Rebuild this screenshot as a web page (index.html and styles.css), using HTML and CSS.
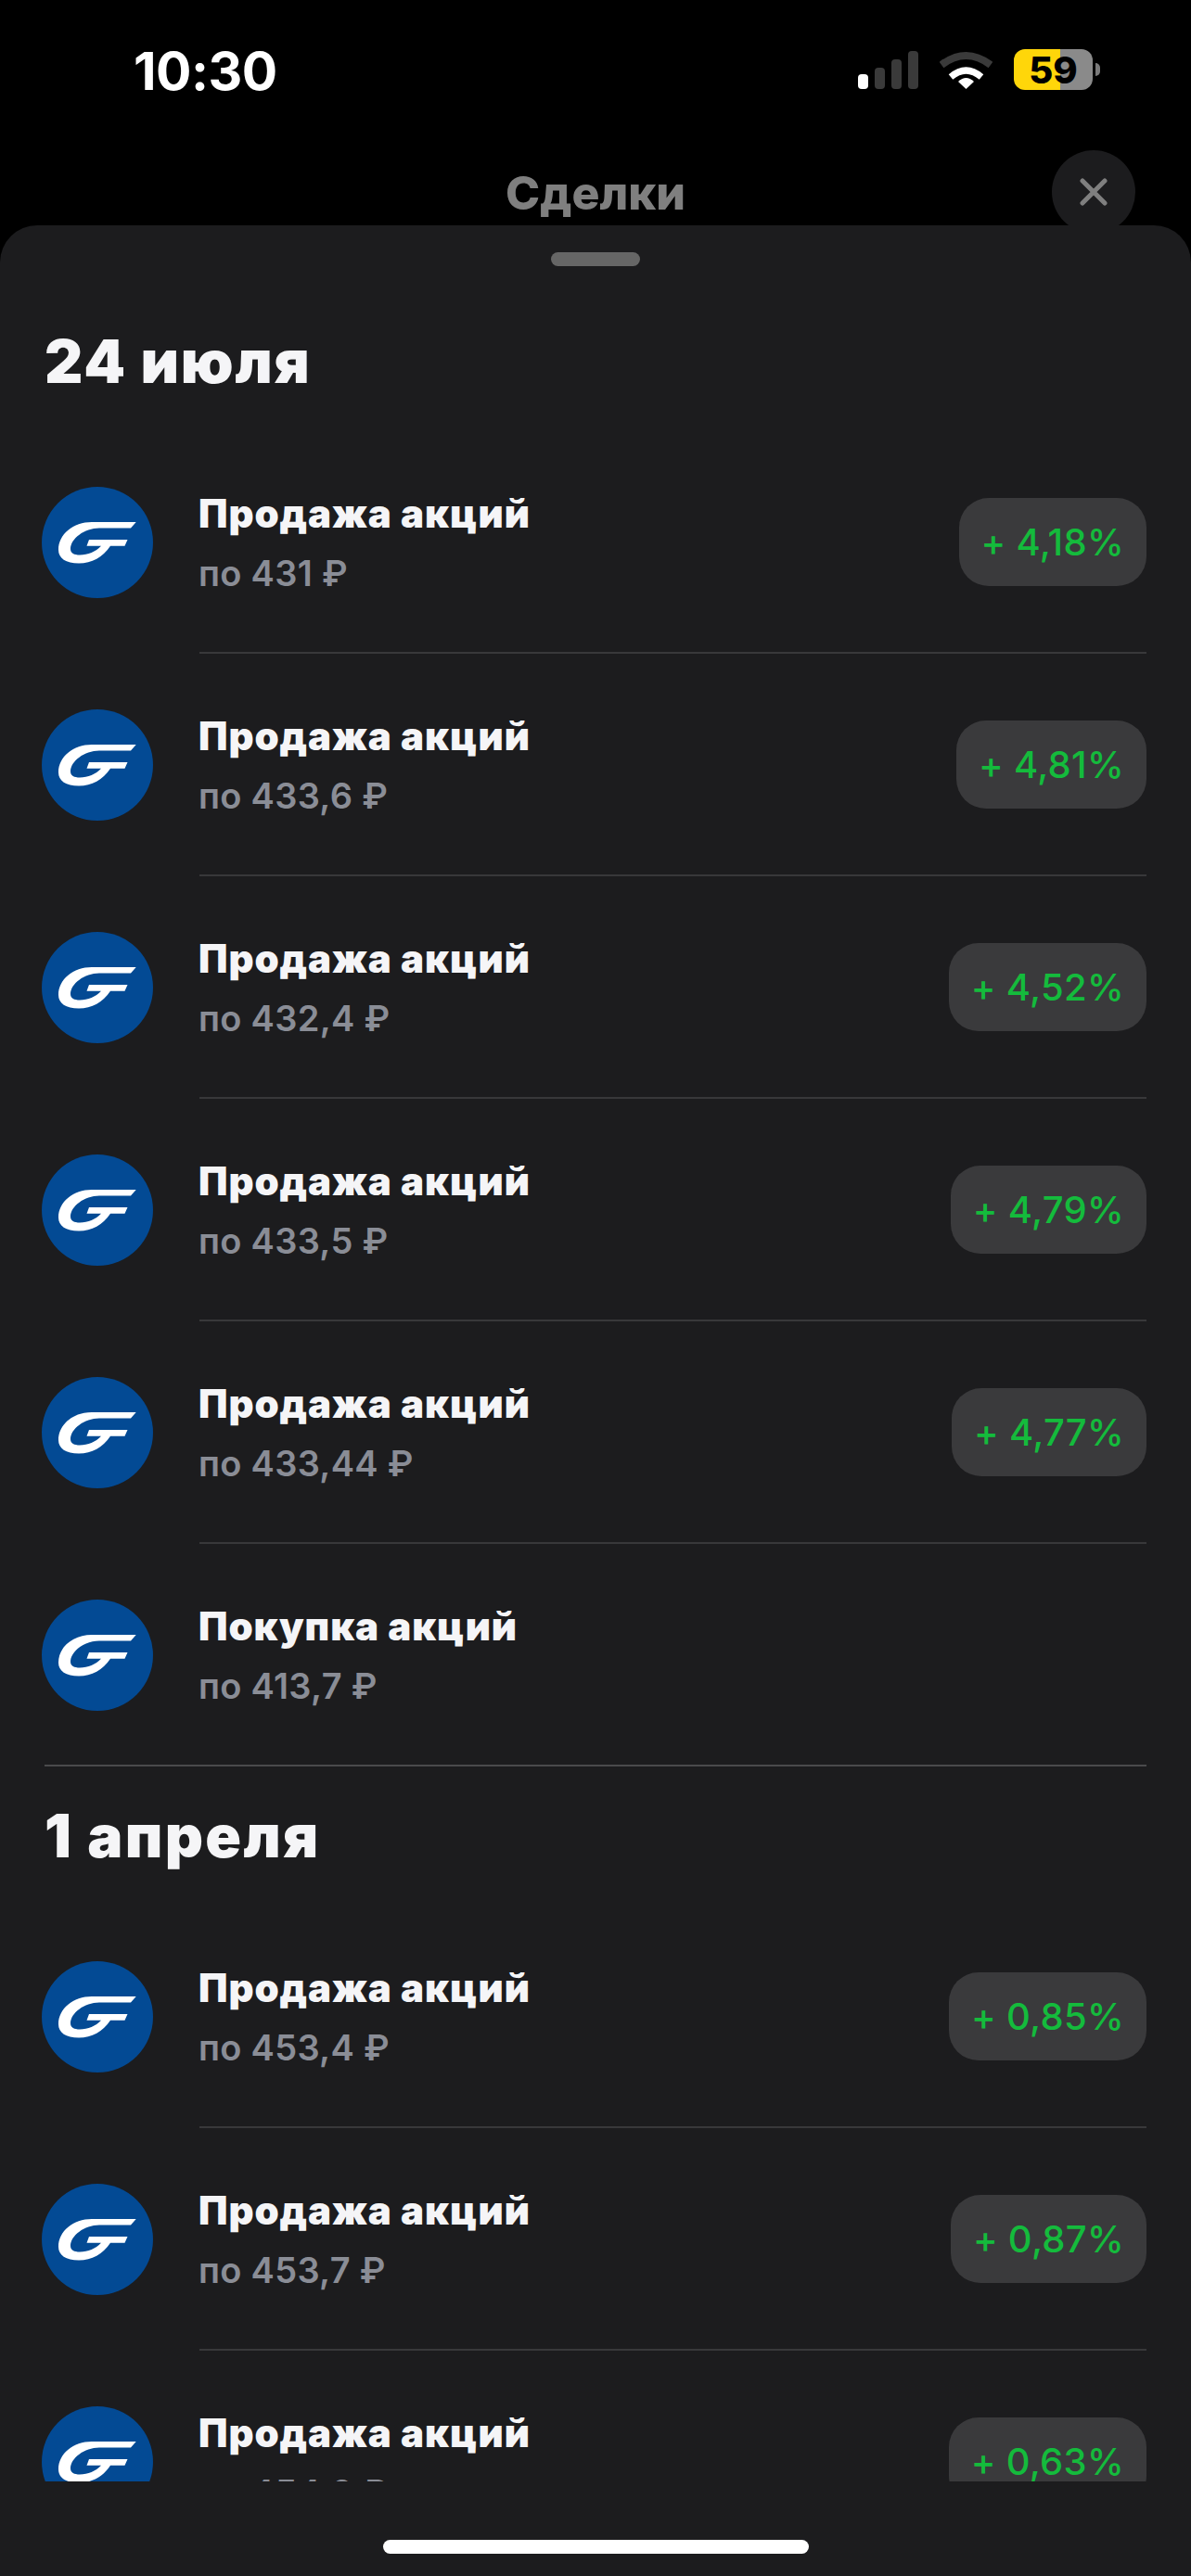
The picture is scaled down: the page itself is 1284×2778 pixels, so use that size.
FILE: index.html
```html
<!DOCTYPE html>
<html lang="ru">
<head>
  <meta charset="UTF-8">
  <title>Сделки</title>
  <link rel="stylesheet" href="styles.css">
</head>
<body>
  <svg class="defs" width="0" height="0">
    <symbol id="logo" viewBox="0 0 120 120">
      <circle cx="60" cy="60" r="60" fill="#034a94"/>
      <path fill="#fff" d="M101.7 38 L96 44.5 H62 C46 44.5 31 56 31 67 C31 71.5 35 73.5 41 73.5 C50 73.5 58 70 64 63.8 H48.5 L51 57 H92.5 L89.5 63.8 H74 C66 76 54 82.5 40 82.5 C26 82.5 18 77 18 68 C18 51 34 38 54 38 Z"/>
    </symbol>
  </svg>

  <div class="status-bar">
    <span class="time">10:30</span>
    <div class="status-icons">
      <div class="signal">
        <i class="bar bar-1 on"></i>
        <i class="bar bar-2"></i>
        <i class="bar bar-3"></i>
        <i class="bar bar-4"></i>
      </div>
      <svg class="wifi" width="57" height="41" viewBox="0 0 57 41">
        <path d="M2 15 Q28.5 -5 55 15" fill="none" stroke="#3a3a3a" stroke-width="8"/>
        <path d="M12 28 Q28.5 14 45 28" fill="none" stroke="#fff" stroke-width="7"/>
        <path d="M20 33 Q28.5 25 37 33 L28.5 41 Z" fill="#fff"/>
      </svg>
      <div class="battery"><span>59</span></div>
      <i class="battery-tip"></i>
    </div>
  </div>

  <div class="nav">
    <h1 class="nav-title">Сделки</h1>
    <button class="close" type="button">
      <svg width="30" height="30" viewBox="0 0 30 30">
        <path d="M3 3 L27 27 M27 3 L3 27" fill="none" stroke="#7f7f7f" stroke-width="5" stroke-linecap="round"/>
      </svg>
    </button>
  </div>

  <div class="sheet">
    <div class="handle"></div>
    <div class="list">
      <section class="group">
        <h2 class="date">24 июля</h2>
        <div class="row">
          <svg class="avatar"><use href="#logo"/></svg>
          <div class="row-body">
            <div class="info"><div class="name">Продажа акций</div><div class="price">по 431 ₽</div></div>
            <span class="pill">+ 4,18%</span>
          </div>
        </div>
        <div class="row">
          <svg class="avatar"><use href="#logo"/></svg>
          <div class="row-body">
            <div class="info"><div class="name">Продажа акций</div><div class="price">по 433,6 ₽</div></div>
            <span class="pill">+ 4,81%</span>
          </div>
        </div>
        <div class="row">
          <svg class="avatar"><use href="#logo"/></svg>
          <div class="row-body">
            <div class="info"><div class="name">Продажа акций</div><div class="price">по 432,4 ₽</div></div>
            <span class="pill">+ 4,52%</span>
          </div>
        </div>
        <div class="row">
          <svg class="avatar"><use href="#logo"/></svg>
          <div class="row-body">
            <div class="info"><div class="name">Продажа акций</div><div class="price">по 433,5 ₽</div></div>
            <span class="pill">+ 4,79%</span>
          </div>
        </div>
        <div class="row">
          <svg class="avatar"><use href="#logo"/></svg>
          <div class="row-body">
            <div class="info"><div class="name">Продажа акций</div><div class="price">по 433,44 ₽</div></div>
            <span class="pill">+ 4,77%</span>
          </div>
        </div>
        <div class="row last">
          <svg class="avatar"><use href="#logo"/></svg>
          <div class="row-body">
            <div class="info"><div class="name">Покупка акций</div><div class="price">по 413,7 ₽</div></div>
          </div>
        </div>
      </section>

      <section class="group">
        <h2 class="date date-wide">1 апреля</h2>
        <div class="row">
          <svg class="avatar"><use href="#logo"/></svg>
          <div class="row-body">
            <div class="info"><div class="name">Продажа акций</div><div class="price">по 453,4 ₽</div></div>
            <span class="pill">+ 0,85%</span>
          </div>
        </div>
        <div class="row">
          <svg class="avatar"><use href="#logo"/></svg>
          <div class="row-body">
            <div class="info"><div class="name">Продажа акций</div><div class="price">по 453,7 ₽</div></div>
            <span class="pill">+ 0,87%</span>
          </div>
        </div>
        <div class="row">
          <svg class="avatar"><use href="#logo"/></svg>
          <div class="row-body">
            <div class="info"><div class="name">Продажа акций</div><div class="price">по 454,6 ₽</div></div>
            <span class="pill">+ 0,63%</span>
          </div>
        </div>
      </section>
    </div>
    <div class="home-area"><div class="home-bar"></div></div>
  </div>
</body>
</html>
```

FILE: styles.css
```css
* { box-sizing: border-box; }
html, body { margin: 0; height: 100%; }
body {
  width: 1284px;
  height: 2778px;
  background: #000;
  font-family: Inter, "Noto Sans", sans-serif;
  display: flex;
  flex-direction: column;
  overflow: hidden;
}
.defs { position: absolute; }

.status-bar {
  height: 135px;
  flex: none;
  display: flex;
  justify-content: space-between;
  align-items: flex-start;
  padding: 44px 98px 0 144px;
}
.time { color: #fff; font-size: 57px; line-height: 65px; font-weight: 700; letter-spacing: -0.5px; }
.status-icons { display: flex; align-items: flex-start; padding-top: 9px; }
.signal { display: flex; align-items: flex-end; gap: 7px; height: 41px; margin-top: 2px; }
.bar { width: 11px; border-radius: 4px; background: #3a3a3a; display: block; }
.bar.on { background: #fff; }
.bar-1 { height: 16px; }
.bar-2 { height: 23px; }
.bar-3 { height: 32px; }
.bar-4 { height: 41px; }
.wifi { margin: 2px 23px 0; }
.battery {
  width: 85px;
  height: 44px;
  border-radius: 12px;
  background: linear-gradient(to right, #ffd60a 50px, #8a8a8a 50px);
  display: flex;
  align-items: center;
  justify-content: center;
  color: #000;
  font-size: 40px;
  font-weight: 800;
}
.battery-tip {
  display: block;
  width: 5px;
  height: 14px;
  margin: 15px 0 0 3px;
  background: #7a7a7a;
  border-radius: 0 7px 7px 0;
}

.nav {
  height: 108px;
  flex: none;
  display: flex;
  justify-content: center;
  position: relative;
}
.nav-title { margin: 0; padding-top: 43px; color: #7f7f7f; font-size: 50px; line-height: 60px; font-weight: 800; }
.close {
  position: absolute;
  left: 1134px;
  top: 27px;
  width: 90px;
  height: 90px;
  border: 0;
  padding: 0;
  border-radius: 50%;
  background: #1c1c1e;
  display: flex;
  align-items: center;
  justify-content: center;
}

.sheet {
  flex: 1;
  min-height: 0;
  background: #1c1c1e;
  border-radius: 40px 40px 0 0;
  display: flex;
  flex-direction: column;
  position: relative;
}
.handle { width: 96px; height: 15px; margin: 29px auto 28px; background: #666; border-radius: 8px; flex: none; }
.list { flex: 1; min-height: 0; overflow: hidden; padding: 0 48px; }

.group { padding-top: 35px; border-bottom: 2px solid #4a4a4c; }
.group:last-child { border-bottom: 0; }
.date { margin: 0 0 35px; color: #f5f5f7; font-size: 64px; line-height: 80px; font-weight: 900; letter-spacing: 1.8px; }
.date-wide { letter-spacing: 2.3px; }

.row { display: flex; height: 240px; align-items: stretch; }
.row.last { height: 238px; }
.row .avatar { width: 120px; height: 120px; margin: 60px 50px 0 -3px; flex: none; }
.row-body {
  flex: 1;
  display: flex;
  align-items: center;
  justify-content: space-between;
  border-bottom: 2px solid #38383a;
}
.row.last .row-body { border-bottom: 0; }
.info { margin-left: -1px; padding-top: 2px; }
.name { color: #f5f5f7; font-size: 42px; line-height: 50px; font-weight: 900; letter-spacing: 0.9px; }
.price { margin-top: 16px; color: #8a8d96; font-size: 38px; line-height: 46px; font-weight: 600; letter-spacing: 0.3px; }
.pill {
  height: 95px;
  padding: 0 24px;
  border-radius: 32px;
  background: #3a3a3c;
  color: #14bb3c;
  font-size: 40px;
  font-weight: 500;
  line-height: 95px;
  letter-spacing: 0.3px;
}

.home-area { height: 102px; flex: none; padding-top: 63px; }
.home-bar { width: 459px; height: 15px; margin: 0 auto; background: #fff; border-radius: 8px; }
```
